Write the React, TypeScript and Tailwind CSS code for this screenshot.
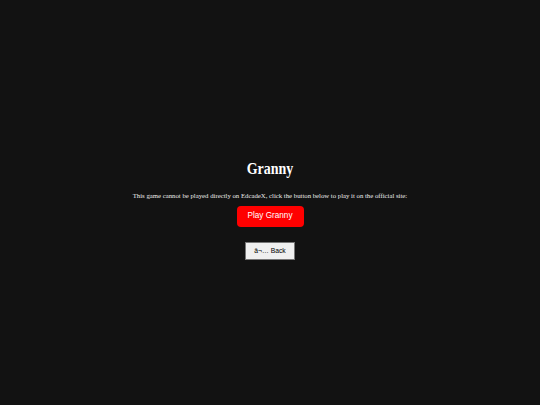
export default function App() {
  return (
    <div className="min-h-[405px] w-full bg-[#121212] text-white font-['Liberation_Serif',serif] flex flex-col items-center pt-[159px]">
      <h1 className="text-[14px] font-bold leading-[20px] scale-y-[1.15]">Granny</h1>
      <p className="mt-[12px] text-[6.75px] leading-[9px] text-[#ececec]">
        This game cannot be played directly on EdcadeX, click the button below to play it on the official site:
      </p>
      <button className="mt-[6px] w-[67px] h-[21px] rounded-[4px] bg-[#ff0000] text-white text-[8.2px] font-['Liberation_Sans',sans-serif]">
        Play Granny
      </button>
      <button className="mt-[15px] w-[50px] h-[18px] bg-[#efefef] border border-[#767676] text-black text-[6.75px] font-['Liberation_Sans',sans-serif]">
        â¬… Back
      </button>
    </div>
  );
}
